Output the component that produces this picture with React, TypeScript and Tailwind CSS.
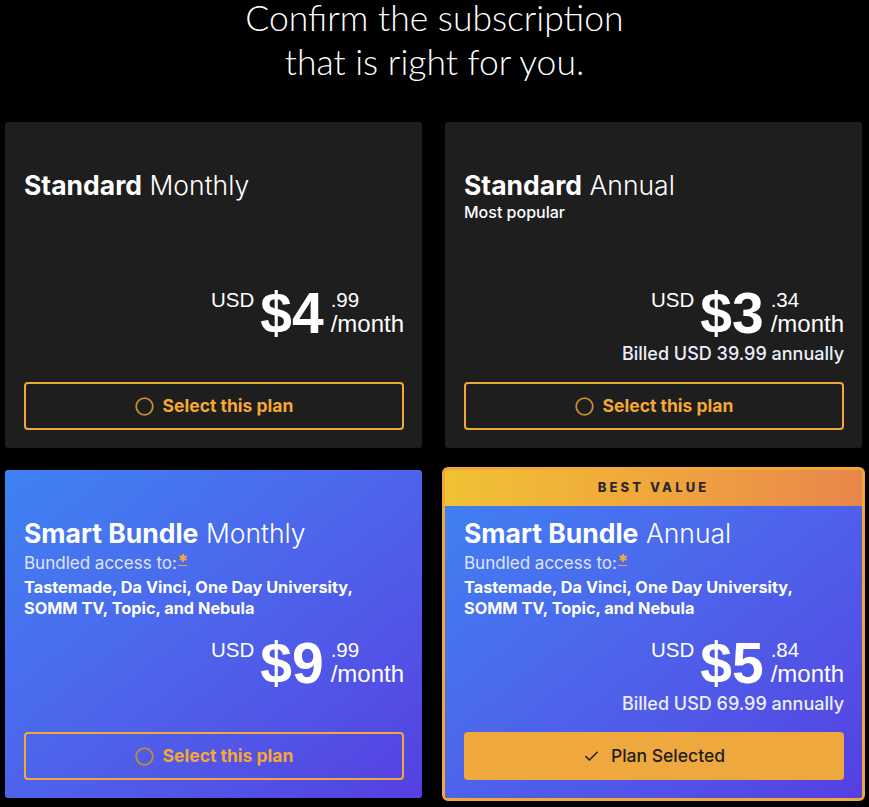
import { Check } from "lucide-react";
import clsx from "clsx";

type Plan = {
  name: string;
  term: string;
  note?: string;
  bundle?: boolean;
  dollars: string;
  cents: string;
  billed?: string;
  bestValue?: boolean;
  selected?: boolean;
};

const plans: Plan[] = [
  { name: "Standard", term: "Monthly", dollars: "4", cents: ".99" },
  {
    name: "Standard",
    term: "Annual",
    note: "Most popular",
    dollars: "3",
    cents: ".34",
    billed: "Billed USD 39.99 annually",
  },
  { name: "Smart Bundle", term: "Monthly", bundle: true, dollars: "9", cents: ".99" },
  {
    name: "Smart Bundle",
    term: "Annual",
    bundle: true,
    dollars: "5",
    cents: ".84",
    billed: "Billed USD 69.99 annually",
    bestValue: true,
    selected: true,
  },
];

function PlanCard({ plan }: { plan: Plan }) {
  return (
    <div
      className={clsx(
        "flex flex-col rounded-[3px] text-white",
        plan.bundle
          ? "bg-linear-to-br from-[#3d82f3] to-[#553fe2]"
          : "bg-[#1e1e1e]",
        plan.selected && "outline-[3px] outline-[#f0a83a]"
      )}
    >
      {plan.bestValue ? (
        <div className="flex h-[36px] items-center justify-center bg-linear-to-r from-[#f1c233] via-[#f0a63c] to-[#e8864b] text-[13px] font-extrabold tracking-[0.24em] text-[#2a2a2a]">
          BEST VALUE
        </div>
      ) : (
        <div className="h-[36px]" />
      )}

      <div className="flex flex-1 flex-col pb-[18px] pl-[19px] pr-[18px] pt-[11px]">
        <div className="min-h-[100px]">
          <h2 className="text-[26.5px] leading-[32px]">
            <span className="font-bold">{plan.name}</span>{" "}
            <span className="font-light">{plan.term}</span>
          </h2>
          {plan.note && (
            <p className="text-[16px] font-medium leading-[22px]">{plan.note}</p>
          )}
          {plan.bundle && (
            <>
              <p className="mt-[3px] text-[17px] leading-[22px] text-[#e2e4f8]">
                Bundled access to:
                <span className="ml-[1px] inline-block border-b border-[#f0a83a] align-top font-['DejaVu_Sans',sans-serif] text-[11px] leading-[13px] text-[#f0a83a]">
                  ✱
                </span>
              </p>
              <p className="mt-[3px] text-[16.3px] font-bold leading-[21px]">
                Tastemade, Da Vinci, One Day University,
                <br />
                SOMM TV, Topic, and Nebula
              </p>
            </>
          )}
        </div>

        <div className="mt-[16px] flex items-start justify-end font-['Liberation_Sans',Arial,sans-serif]">
          <span className="mr-[6px] mt-[5px] text-[20.5px] leading-[20px]">USD</span>
          <span className="text-[57px] font-bold leading-[56px]">${plan.dollars}</span>
          <div className="ml-[7px] mt-[5px] flex flex-col">
            <span className="text-[20.5px] leading-[20px]">{plan.cents}</span>
            <span className="mt-[2px] text-[24px] leading-[24px]">/month</span>
          </div>
        </div>

        {plan.billed && (
          <p className="text-right text-[18px] font-medium leading-[26px] text-[#eceefa]">
            {plan.billed}
          </p>
        )}

        <div className="mt-auto pt-[15px]">
          {plan.selected ? (
            <button className="flex h-[48px] w-full items-center justify-center gap-[11px] rounded-[4px] bg-[#efa83e] text-[17.5px] font-medium text-[#1c211c]">
              <Check size={17} strokeWidth={2.2} />
              Plan Selected
            </button>
          ) : (
            <button className="flex h-[48px] w-full items-center justify-center gap-[9px] rounded-[4px] border-2 border-[#f0a83a] text-[17.5px] font-bold text-[#f5a833]">
              <svg width="19" height="19" viewBox="0 0 19 19">
                <circle cx="9.5" cy="9.5" r="8.3" fill="none" stroke="#c48c30" strokeWidth="1.8" />
              </svg>
              Select this plan
            </button>
          )}
        </div>
      </div>
    </div>
  );
}

export default function App() {
  return (
    <main className="min-h-screen bg-black font-['Inter',sans-serif] text-white">
      <h1 className="mb-[42px] flex flex-col items-center gap-[8px] font-['Lato',sans-serif] text-[35.5px] font-light leading-[36px]">
        <span>Confirm the subscription</span>
        <span>that is right for you.</span>
      </h1>

      <div className="grid grid-cols-2 gap-x-[23px] gap-y-[22px] pl-[5px] pr-[7px]">
        {plans.map((plan) => (
          <PlanCard key={plan.name + plan.term} plan={plan} />
        ))}
      </div>
    </main>
  );
}
